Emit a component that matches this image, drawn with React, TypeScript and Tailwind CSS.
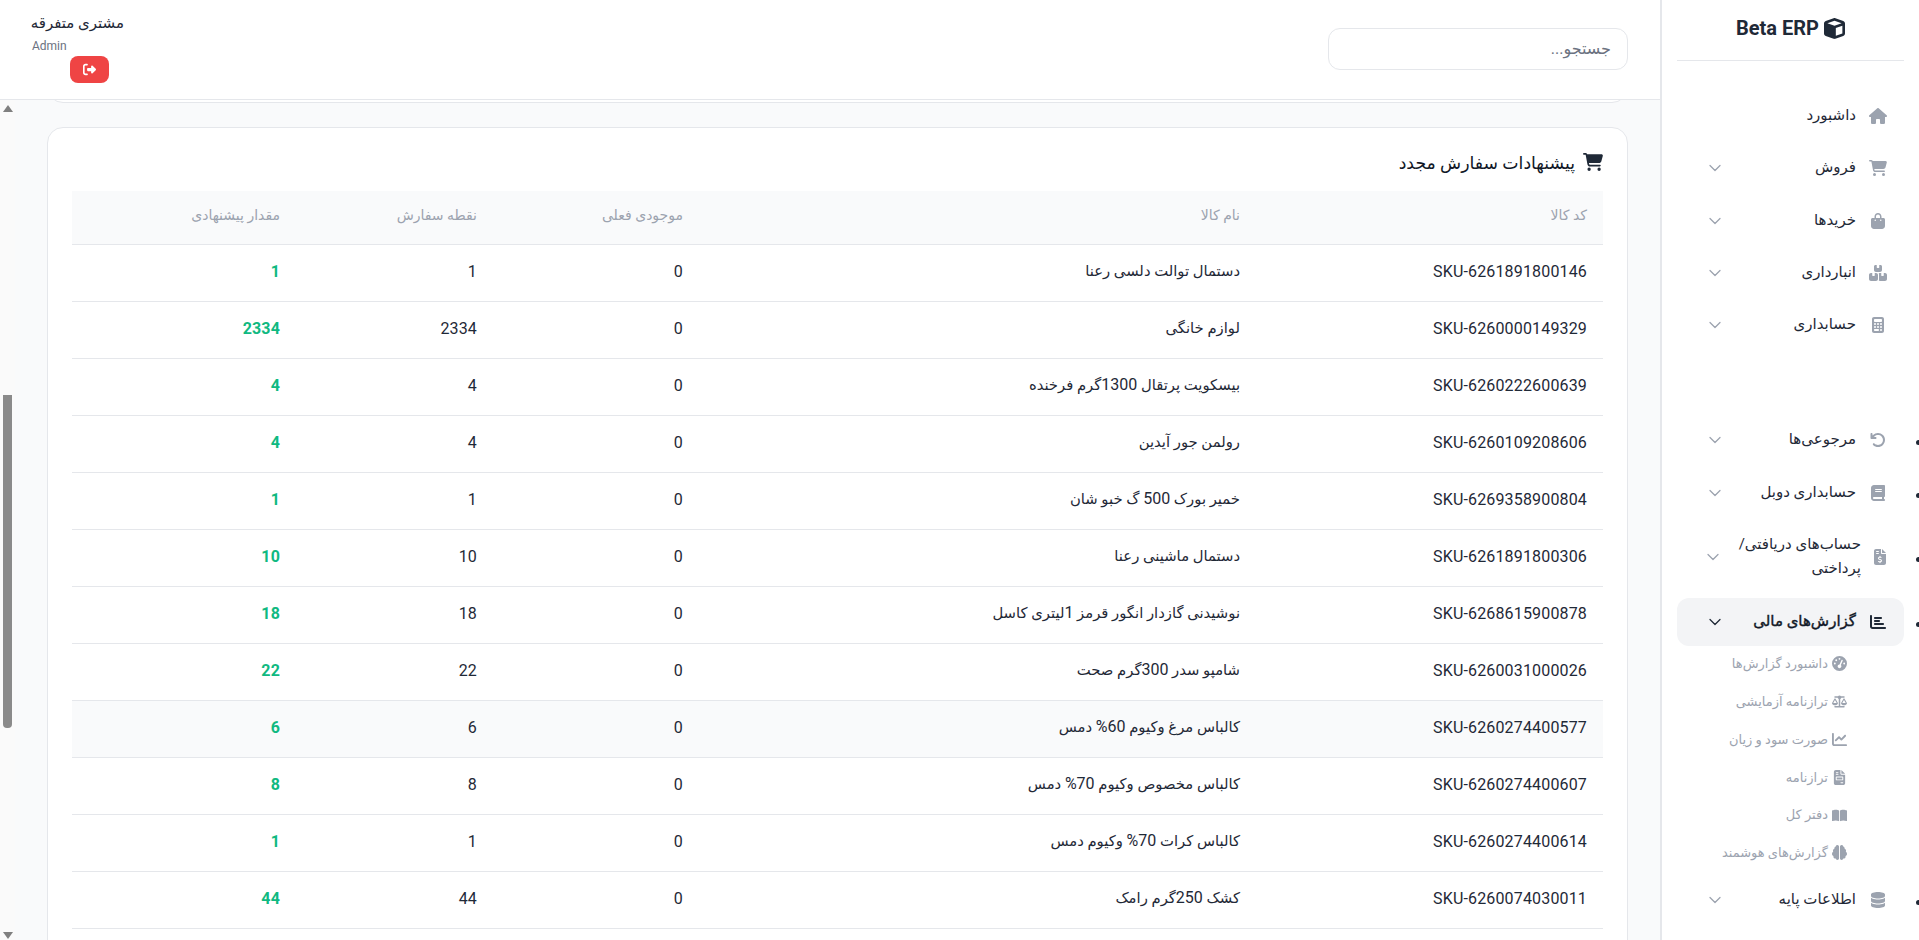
import { ChevronDown } from "lucide-react";
import {
  FaArrowRotateLeft,
  FaBook,
  FaBookOpen,
  FaBoxesStacked,
  FaBrain,
  FaCalculator,
  FaBagShopping,
  FaCartShopping,
  FaChartBar,
  FaChartLine,
  FaCube,
  FaDatabase,
  FaFileInvoice,
  FaFileInvoiceDollar,
  FaGaugeHigh,
  FaHouse,
  FaRightFromBracket,
  FaScaleBalanced,
} from "react-icons/fa6";
import type { IconType } from "react-icons";

const topMenu: { label: string; icon: IconType; arrow?: boolean }[] = [
  { label: "داشبورد", icon: FaHouse },
  { label: "فروش", icon: FaCartShopping, arrow: true },
  { label: "خریدها", icon: FaBagShopping, arrow: true },
  { label: "انبارداری", icon: FaBoxesStacked, arrow: true },
  { label: "حسابداری", icon: FaCalculator, arrow: true },
];

const subMenu: { label: string; icon: IconType }[] = [
  { label: "داشبورد گزارش‌ها", icon: FaGaugeHigh },
  { label: "ترازنامه آزمایشی", icon: FaScaleBalanced },
  { label: "صورت سود و زیان", icon: FaChartLine },
  { label: "ترازنامه", icon: FaFileInvoice },
  { label: "دفتر کل", icon: FaBookOpen },
  { label: "گزارش‌های هوشمند", icon: FaBrain },
];

const rows = [
  ["SKU-6261891800146", "دستمال توالت دلسی رعنا", "0", "1", "1"],
  ["SKU-6260000149329", "لوازم خانگی", "0", "2334", "2334"],
  ["SKU-6260222600639", "بیسکویت پرتقال 1300گرم فرخنده", "0", "4", "4"],
  ["SKU-6260109208606", "رولمن جور آیدین", "0", "4", "4"],
  ["SKU-6269358900804", "خمیر بورک 500 گ خبو شان", "0", "1", "1"],
  ["SKU-6261891800306", "دستمال ماشینی رعنا", "0", "10", "10"],
  ["SKU-6268615900878", "نوشیدنی گازدار انگور قرمز 1لیتری کاسل", "0", "18", "18"],
  ["SKU-6260031000026", "شامپو سدر 300گرم صحت", "0", "22", "22"],
  ["SKU-6260274400577", "کالباس مرغ وکیوم 60% دمس", "0", "6", "6"],
  ["SKU-6260274400607", "کالباس مخصوص وکیوم 70% دمس", "0", "8", "8"],
  ["SKU-6260274400614", "کالباس کرات 70% وکیوم دمس", "0", "1", "1"],
  ["SKU-6260074030011", "کشک 250گرم رامک", "0", "44", "44"],
];

const MenuItem = ({
  label,
  icon: Icon,
  arrow,
  active,
  className = "h-[48.25px] gap-3 pr-4 pl-[28px]",
}: {
  label: string;
  icon: IconType;
  arrow?: boolean;
  active?: boolean;
  className?: string;
}) => (
  <a
    className={`flex items-center rounded-xl text-[15px] leading-[24px] ${className} ${
      active ? "bg-[#f3f4f6] text-[#111827] [-webkit-text-stroke:0.4px_#111827]" : "text-[#1f2937]"
    }`}
  >
    <Icon className={`h-4 w-5 shrink-0 ${active ? "text-[#1f2937]" : "text-[#9ca3af]"}`} />
    <span className="min-w-0 flex-1 pb-[2px]">{label}</span>
    {arrow && (
      <ChevronDown
        strokeWidth={1.5}
        className={`h-5 w-5 shrink-0 ${active ? "text-[#1f2937]" : "text-[#9ca3af]"}`}
      />
    )}
  </a>
);

// digits in a product name are set like the other numbers, a bit larger than the Persian text
const ProductName = ({ name }: { name: string }) => (
  <>
    {name.split(/(\d+%?)/).map((part, i) =>
      i % 2 === 1 ? (
        <span key={i} className="text-[16px] tracking-[0.16px]">
          {part}
        </span>
      ) : (
        part
      ),
    )}
  </>
);

const App = () => {
  return (
    <div
      dir="rtl"
      className="flex h-[940px] w-full overflow-hidden bg-[#f9fafb] font-['Roboto','DejaVu_Sans',sans-serif] text-[#1f2937]"
    >
      {/* Sidebar */}
      <aside className="flex w-[259px] shrink-0 flex-col border-l-2 border-[#e5e7eb] bg-white px-[15px]">
        <div className="flex h-[61px] shrink-0 items-center justify-center gap-[5px] border-b border-[#e5e7eb] pb-1 text-[20px] font-bold text-[#1f2937]">
          <FaCube className="h-[21px] w-[21px]" />
          <span dir="ltr">Beta ERP</span>
        </div>
        <ul className="mt-[31px] flex flex-col gap-1">
          {topMenu.map((m) => (
            <li key={m.label}>
              <MenuItem {...m} />
            </li>
          ))}
        </ul>
        <ul className="mt-[67px] flex list-disc flex-col gap-1">
          <li>
            <MenuItem label="مرجوعی‌ها" icon={FaArrowRotateLeft} arrow />
          </li>
          <li>
            <MenuItem label="حسابداری دوبل" icon={FaBook} arrow />
          </li>
          <li>
            <MenuItem
              label="حساب‌های دریافتی/ پرداختی"
              icon={FaFileInvoiceDollar}
              arrow
              className="h-[73px] gap-[9px] pr-[14px] pl-[26px]"
            />
          </li>
          <li>
            <MenuItem label="گزارش‌های مالی" icon={FaChartBar} arrow active />
            <div className="mt-[-1px] flex flex-col pr-[57px]">
              {subMenu.map((s) => (
                <a key={s.label} className="flex h-[37.8px] items-center gap-1 text-[13px] text-[#9ca3af]">
                  <s.icon className="h-[15px] w-[15px] shrink-0" />
                  <span>{s.label}</span>
                </a>
              ))}
            </div>
          </li>
          <li>
            <MenuItem label="اطلاعات پایه" icon={FaDatabase} arrow />
          </li>
        </ul>
      </aside>

      {/* Main */}
      <div className="flex min-w-0 flex-1 flex-col">
        <header className="relative z-10 flex h-[100px] shrink-0 items-start justify-between border-b border-[#e5e7eb] bg-white px-[32px]">
          <div className="mt-[28px] flex h-[42px] w-[300px] items-center rounded-xl border border-[#e5e7eb] px-4 text-[16px] text-[#6b7280]">
            جستجو...
          </div>
          <div className="mt-[13px] flex w-[92px] flex-col">
            <span className="whitespace-nowrap text-[15px] leading-[20px] text-[#1f2937]">مشتری متفرقه</span>
            <span dir="ltr" className="mt-[5px] self-end text-[12px] leading-[16px] text-[#6b7280]">
              Admin
            </span>
            <button className="ml-[38px] mt-[2px] flex h-[27px] w-[39px] items-center justify-center self-end rounded-lg bg-[#ef4444] text-white">
              <FaRightFromBracket className="h-[13px] w-[13px]" />
            </button>
          </div>
        </header>

        <div className="flex min-h-0 flex-1">
          <main className="min-w-0 flex-1 overflow-hidden px-[32px]">
            <div className="mt-[-18px] h-[21px] rounded-b-2xl border border-[#e5e7eb] bg-white" />
            <section className="mt-[24px] rounded-2xl border border-[#e5e7eb] bg-white px-[24px] pt-[24px]">
              <h2 className="flex h-[39px] items-start gap-2 text-[17.3px] leading-[22px] text-[#111827]">
                <FaCartShopping className="mt-[1px] h-[18px] w-[20px] text-[#1f2937]" />
                <span>پیشنهادات سفارش مجدد</span>
              </h2>
              <table className="w-full table-fixed border-collapse">
                <colgroup>
                  <col className="w-[347px]" />
                  <col className="w-[557px]" />
                  <col className="w-[206px]" />
                  <col className="w-[197px]" />
                  <col />
                </colgroup>
                <thead>
                  <tr className="h-[53px] border-b border-[#e5e7eb] bg-[#f9fafb] text-[14px] text-[#9ca3af]">
                    {["کد کالا", "نام کالا", "موجودی فعلی", "نقطه سفارش", "مقدار پیشنهادی"].map((h) => (
                      <th key={h} className="px-4 pb-[4px] text-right font-normal">
                        {h}
                      </th>
                    ))}
                  </tr>
                </thead>
                <tbody className="text-[16px] tracking-[0.16px]">
                  {rows.map((r, i) => (
                    <tr key={r[0]} className={`h-[57px] border-b border-[#e5e7eb] ${i === 8 ? "bg-[#f9fafb]" : ""}`}>
                      <td className="px-4 pb-[2px]">{r[0]}</td>
                      <td className="px-4 pb-[3px] text-[14.8px] tracking-normal">
                        <ProductName name={r[1]} />
                      </td>
                      <td className="px-4 pb-[2px]">{r[2]}</td>
                      <td className="px-4 pb-[2px]">{r[3]}</td>
                      <td className="px-4 pb-[2px] font-bold text-[#10b981]">{r[4]}</td>
                    </tr>
                  ))}
                  <tr className="h-[57px]">
                    <td colSpan={5} />
                  </tr>
                </tbody>
              </table>
            </section>
          </main>
          {/* Scrollbar */}
          <div className="flex h-full w-[15px] shrink-0 flex-col items-center bg-[#fafafa]">
            <div className="mt-[5px] h-0 w-0 border-x-[5px] border-b-[7px] border-x-transparent border-b-[#7f7f7f]" />
            <div className="mt-[283px] h-[333px] w-[9px] rounded-b-[4px] bg-[#8a8a8a]" />
            <div className="mt-auto mb-[1px] h-0 w-0 border-x-[5px] border-t-[7px] border-x-transparent border-t-[#7f7f7f]" />
          </div>
        </div>
      </div>
    </div>
  );
};

export default App;
